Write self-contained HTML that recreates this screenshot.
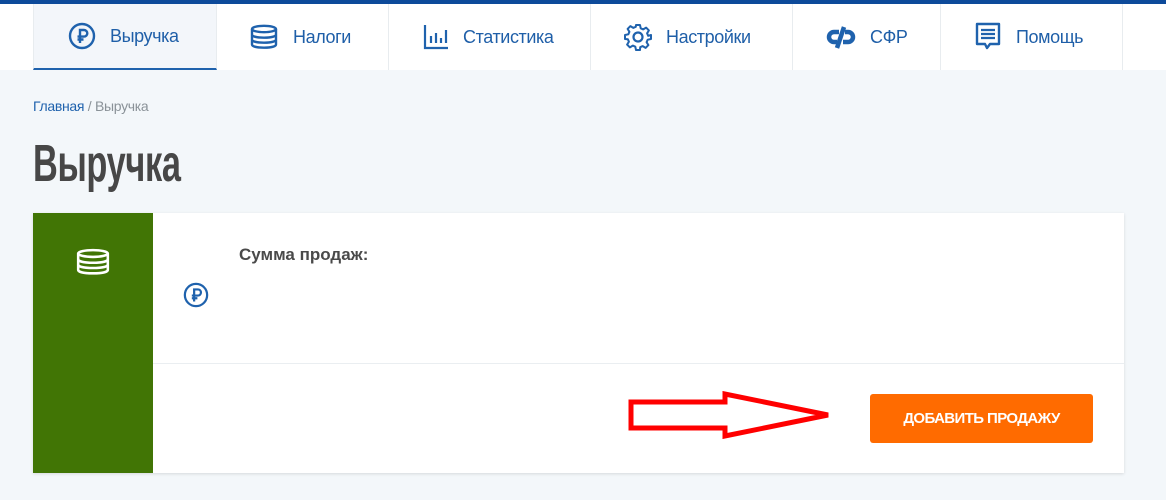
<!DOCTYPE html>
<html><head><meta charset="utf-8"><style>
*{box-sizing:border-box;margin:0;padding:0}
body{width:1166px;height:500px;background:#f3f7fa;font-family:"Liberation Sans",sans-serif;position:relative;overflow:hidden}
.top{position:absolute;left:0;top:0;width:1166px;height:4px;background:#0d4a9a}
.nav{position:absolute;left:0;top:4px;width:1166px;height:66px;background:#fff}
.tab{position:absolute;top:0;height:66px;border-right:1px solid #e8ecef;display:flex;align-items:center;color:#1f5fa8;font-size:18px;letter-spacing:-0.4px}
.tab svg{margin-right:14px}
.act{background:#f3f6fa;border-bottom:2px solid #1f62ad}
.bc{position:absolute;left:33px;top:98px;font-size:14px;color:#8a9298;letter-spacing:-0.3px}
.bc a{color:#1f62ad}
.h1{position:absolute;left:33px;top:134px;font-size:52px;font-weight:bold;color:#474747;transform:scaleX(0.66);transform-origin:left top;letter-spacing:-0.5px}
.card{position:absolute;left:33px;top:213px;width:1091px;height:260px;background:#fff;box-shadow:0 1px 3px rgba(0,0,0,.12)}
.green{position:absolute;left:0;top:0;width:120px;height:260px;background:#417505}
.div{position:absolute;left:120px;right:0;top:150px;height:1px;background:#eaeef1}
.lbl{position:absolute;left:206px;top:32px;font-size:17px;font-weight:bold;color:#4a4a4a}
.btn{position:absolute;left:837px;top:181px;width:223px;height:49px;background:#ff6b00;border-radius:3px;color:#fff;font-weight:bold;font-size:15px;display:flex;align-items:center;justify-content:center;letter-spacing:-0.6px}
</style></head><body>
<div class="top"></div>
<div class="nav">
 <div class="tab act" style="left:33px;width:184px;padding-left:34px;border-left:1px solid #e8ecef"><svg width="28" height="28" viewBox="0 0 28 28"><circle cx="14" cy="14" r="12" fill="none" stroke="#1f62ad" stroke-width="2.4"/><path d="M12 21V8h4a3.3 3.3 0 010 6.6h-6.5M9.5 17.5h6" fill="none" stroke="#1f62ad" stroke-width="2.4"/></svg>Выручка</div>
 <div class="tab" style="left:217px;width:172px;padding-left:32px"><svg width="30" height="26" viewBox="0 0 30 26"><g fill="none" stroke="#1f62ad" stroke-width="2.4"><ellipse cx="15" cy="5" rx="12" ry="3.2"/><path d="M3 10.5c0 2 5.4 3.2 12 3.2s12-1.2 12-3.2M3 15.5c0 2 5.4 3.2 12 3.2s12-1.2 12-3.2M3 20.5c0 2 5.4 3.2 12 3.2s12-1.2 12-3.2M3 5v15.5M27 5v15.5"/></g></svg>Налоги</div>
 <div class="tab" style="left:389px;width:202px;padding-left:34px"><svg width="26" height="26" viewBox="0 0 26 26"><path d="M2 1v23h23M8 19v-7M13 19V9M18 19v-5M23 19V6" fill="none" stroke="#1f62ad" stroke-width="2.2"/></svg>Статистика</div>
 <div class="tab" style="left:591px;width:202px;padding-left:33px"><svg width="28" height="28" viewBox="0 0 28 28"><circle cx="14" cy="14" r="4.5" fill="none" stroke="#1f62ad" stroke-width="2.2"/><path d="M12 2h4l.7 3.3 2.5 1.1 2.9-1.8 2.8 2.8-1.8 2.9 1.1 2.5L27 12v4l-3.3.7-1.1 2.5 1.8 2.9-2.8 2.8-2.9-1.8-2.5 1.1L16 27h-4l-.7-3.3-2.5-1.1-2.9 1.8-2.8-2.8 1.8-2.9-1.1-2.5L1 16v-4l3.3-.7 1.1-2.5-1.8-2.9 2.8-2.8 2.9 1.8 2.5-1.1z" fill="none" stroke="#1f62ad" stroke-width="2" stroke-linejoin="round"/></svg>Настройки</div>
 <div class="tab" style="left:793px;width:148px;padding-left:33px"><svg width="30" height="26" viewBox="0 0 30 26"><path d="M13 8H8a5 5 0 000 10h3M17 18h5a5 5 0 000-10h-3M18 3L11 24" fill="none" stroke="#1f62ad" stroke-width="4.5"/></svg>СФР</div>
 <div class="tab" style="left:941px;width:182px;padding-left:33px"><svg width="28" height="30" viewBox="0 0 28 30"><path d="M3 2h22v20H16l-3 4-2-4H3z" fill="none" stroke="#1f62ad" stroke-width="2.4" stroke-linejoin="round"/><path d="M7 8h14M7 12h14M7 16h14" stroke="#1f62ad" stroke-width="2.2"/></svg>Помощь</div>
</div>
<div class="bc"><a>Главная</a> / Выручка</div>
<div class="h1">Выручка</div>
<div class="card">
 <div class="green"><svg style="position:absolute;left:42px;top:35px" width="36" height="28" viewBox="0 0 34 26"><g fill="none" stroke="#fff" stroke-width="2.4"><ellipse cx="17" cy="5" rx="14" ry="3.2"/><path d="M3 10.5c0 2 6.3 3.2 14 3.2s14-1.2 14-3.2M3 15.5c0 2 6.3 3.2 14 3.2s14-1.2 14-3.2M3 20.5c0 2 6.3 3.2 14 3.2s14-1.2 14-3.2M3 5v15.5M31 5v15.5"/></g></svg></div>
 <div class="lbl">Сумма продаж:</div>
 <svg style="position:absolute;left:150px;top:69px" width="26" height="26" viewBox="0 0 28 28"><circle cx="14" cy="14" r="12" fill="none" stroke="#1f62ad" stroke-width="2.4"/><path d="M12 21V8h4a3.3 3.3 0 010 6.6h-6.5M9.5 17.5h6" fill="none" stroke="#1f62ad" stroke-width="2.4"/></svg>
 <div class="div"></div>
 <svg style="position:absolute;left:595px;top:178px" width="206" height="48" viewBox="0 0 206 48"><path d="M3 11H97V3L200 24 97 45V37H3z" fill="#fff" stroke="#f00" stroke-width="5"/></svg>
 <div class="btn">ДОБАВИТЬ ПРОДАЖУ</div>
</div>
</body></html>
